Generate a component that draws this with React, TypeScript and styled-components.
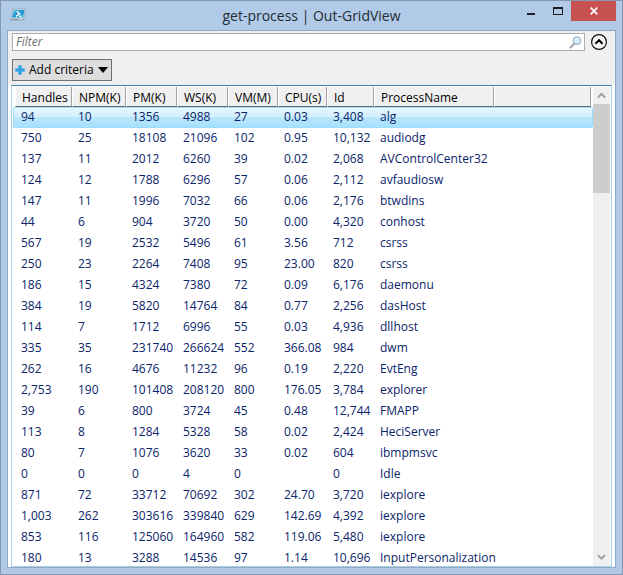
import React, { useState } from "react";
import styled, { createGlobalStyle, css } from "styled-components";

const GlobalStyle = createGlobalStyle`
  *, *::before, *::after { box-sizing: border-box; }
  html, body { margin: 0; padding: 0; }
  body { font: 12px/16px "Open Sans", "Noto Sans", sans-serif; color: #000; }
  button, input { font: inherit; color: inherit; margin: 0; }
`;

const Window = styled.main`
  display: flex;
  flex-direction: column;
  height: 100vh;
  padding: 0 6px 6px;
  background: #b0cae7;
  border: 1px solid #8497b3;
  overflow: hidden;
`;

const TitleBar = styled.header`
  display: grid;
  grid-template-columns: 131px 1fr 131px;
  flex: none;
  height: 29px;
`;

const AppIcon = styled.svg`
  display: block;
  width: 16px;
  height: 14px;
  margin: 7px 0 0 3px;
`;

const Title = styled.h1`
  margin: 0;
  font-size: 14px;
  font-weight: 400;
  line-height: 29px;
  text-align: center;
  white-space: nowrap;
  color: #222a33;
`;

const WindowButtons = styled.div`
  display: flex;
  justify-content: flex-end;
  align-items: flex-start;
`;

const WindowButton = styled.button<{ $close?: boolean }>`
  display: flex;
  align-items: center;
  justify-content: center;
  width: ${(p) => (p.$close ? 45 : 27)}px;
  height: 20px;
  padding: 0;
  border: 0;
  color: #1e1e1e;
  background: ${(p) => (p.$close ? "#c75050" : "transparent")};
`;

const Client = styled.div`
  display: flex;
  flex-direction: column;
  flex: 1;
  min-height: 0;
  border: 1px solid #8fa8c6;
  background: #fff;
`;

const Tools = styled.div`
  display: flex;
  flex-direction: column;
  align-items: flex-start;
  gap: 8px;
  flex: none;
  padding: 2px 7px 4px 4px;
  background: #f0f0f0;
`;

const FilterRow = styled.div`
  display: flex;
  align-items: center;
  gap: 5px;
  width: 100%;
`;

const SearchField = styled.div`
  display: flex;
  align-items: center;
  flex: 1;
  height: 18px;
  padding-right: 2px;
  border: 1px solid #abadb3;
  background: #fff;
`;

const FilterInput = styled.input`
  flex: 1;
  min-width: 0;
  height: 16px;
  padding: 0 3px;
  border: 0;
  outline: 0;
  background: transparent;
  &::placeholder { color: #6d6d6d; font-style: italic; opacity: 1; }
`;

const IconButton = styled.button`
  display: flex;
  flex: none;
  padding: 0;
  border: 0;
  background: transparent;
`;

const CriteriaButton = styled.button`
  display: flex;
  align-items: center;
  gap: 4px;
  height: 22px;
  padding: 0 3px 0 2px;
  border: 1px solid #707070;
  background: #ddd;
`;

const GridFrame = styled.section`
  display: flex;
  flex: 1;
  min-height: 0;
  margin: 0 3px;
  padding: 1px 1px 0;
  border: 1px solid #a9cfe2;
  border-top-color: #3c7fb1;
  background: #fff;
`;

const GridViewport = styled.div`
  flex: 1;
  min-width: 0;
  overflow: hidden;
`;

const Grid = styled.table`
  width: 100%;
  table-layout: fixed;
  border-collapse: separate;
  border-spacing: 0;
`;

const Column = styled.col<{ $width?: number }>`
  width: ${(p) => (p.$width ? `${p.$width}px` : "auto")};
`;

const HeaderCell = styled.th`
  height: 20px;
  padding: 0;
  font-weight: 400;
  text-align: left;
  white-space: nowrap;
  &:first-child { padding-left: 2px; }
  &:last-child { padding-right: 2px; }
`;

const HeaderLabel = styled.span`
  display: block;
  height: 20px;
  padding: 2px 0 0 6px;
  line-height: 18px;
  background: #f0f0f0;
  border-left: 1px solid #fff;
  border-right: 1px solid #a0a0a0;
  border-bottom: 1px solid #696969;
`;

const selectedCell = css`
  background: linear-gradient(#e6f6fe 0%, #d3effd 45%, #bae7fd 50%, #a5e0fb 100%);
  border-top: 1px solid #99defd;
  border-bottom: 1px solid #99defd;
  box-shadow: inset 0 1px #eefaff;
  line-height: 18px;
  &:first-child {
    border-left: 1px solid #99defd;
    border-radius: 2px 0 0 2px;
    padding-left: 7px;
  }
  &:last-child {
    border-right: 1px solid #99defd;
    border-radius: 0 2px 2px 0;
  }
`;

const Row = styled.tr<{ $selected: boolean }>`
  color: #0a246a;
  td {
    height: 21px;
    padding: 0 0 0 6px;
    line-height: 20px;
    white-space: nowrap;
    vertical-align: top;
  }
  td:first-child { padding-left: 8px; }
  ${(p) => p.$selected && css`&& td { ${selectedCell} }`}
`;

const ScrollBar = styled.div`
  display: flex;
  flex-direction: column;
  flex: none;
  width: 17px;
  background: #f0f0f0;
`;

const ScrollButton = styled.button`
  display: flex;
  align-items: center;
  justify-content: center;
  flex: none;
  height: 17px;
  padding: 0;
  border: 0;
  background: transparent;
`;

const ScrollTrack = styled.div`
  flex: 1;
`;

const ScrollThumb = styled.div`
  height: 20%;
  background: #cdcdcd;
`;

const columns: { name: string; width?: number }[] = [
  { name: "Handles", width: 59 },
  { name: "NPM(K)", width: 54 },
  { name: "PM(K)", width: 51 },
  { name: "WS(K)", width: 51 },
  { name: "VM(M)", width: 50 },
  { name: "CPU(s)", width: 49 },
  { name: "Id", width: 47 },
  { name: "ProcessName", width: 120 },
  { name: "" },
];

const processes: string[][] = [
  ["94", "10", "1356", "4988", "27", "0.03", "3,408", "alg"],
  ["750", "25", "18108", "21096", "102", "0.95", "10,132", "audiodg"],
  ["137", "11", "2012", "6260", "39", "0.02", "2,068", "AVControlCenter32"],
  ["124", "12", "1788", "6296", "57", "0.06", "2,112", "avfaudiosw"],
  ["147", "11", "1996", "7032", "66", "0.06", "2,176", "btwdins"],
  ["44", "6", "904", "3720", "50", "0.00", "4,320", "conhost"],
  ["567", "19", "2532", "5496", "61", "3.56", "712", "csrss"],
  ["250", "23", "2264", "7408", "95", "23.00", "820", "csrss"],
  ["186", "15", "4324", "7380", "72", "0.09", "6,176", "daemonu"],
  ["384", "19", "5820", "14764", "84", "0.77", "2,256", "dasHost"],
  ["114", "7", "1712", "6996", "55", "0.03", "4,936", "dllhost"],
  ["335", "35", "231740", "266624", "552", "366.08", "984", "dwm"],
  ["262", "16", "4676", "11232", "96", "0.19", "2,220", "EvtEng"],
  ["2,753", "190", "101408", "208120", "800", "176.05", "3,784", "explorer"],
  ["39", "6", "800", "3724", "45", "0.48", "12,744", "FMAPP"],
  ["113", "8", "1284", "5328", "58", "0.02", "2,424", "HeciServer"],
  ["80", "7", "1076", "3620", "33", "0.02", "604", "ibmpmsvc"],
  ["0", "0", "0", "4", "0", "", "0", "Idle"],
  ["871", "72", "33712", "70692", "302", "24.70", "3,720", "iexplore"],
  ["1,003", "262", "303616", "339840", "629", "142.69", "4,392", "iexplore"],
  ["853", "116", "125060", "164960", "582", "119.06", "5,480", "iexplore"],
  ["180", "13", "3288", "14536", "97", "1.14", "10,696", "InputPersonalization"],
];

function PowerShellIcon() {
  return (
    <AppIcon viewBox="0 0 16 14" aria-hidden="true">
      <defs>
        <linearGradient id="screen" x1="0" y1="0" x2="1" y2="1">
          <stop offset="0" stopColor="#58c4ec" />
          <stop offset="0.5" stopColor="#1b93cc" />
          <stop offset="1" stopColor="#35b5e4" />
        </linearGradient>
      </defs>
      <path d="M3 1h12.5l-2 11H0.5z" fill="#d9e6ee" stroke="#8ba0ae" strokeWidth="0.7" />
      <path d="M3.7 2h10.8l-1.4 7.5H2z" fill="url(#screen)" />
      <path d="M6.7 3.2l3 2.5-3.8 2.6M9.3 8.3h2.4" fill="none" stroke="#fff" strokeWidth="1.4" />
      <path d="M1.4 10.5h11.8l-0.3 1.7H0.6z" fill="#91a0a8" />
      <path d="M9.5 11.2h2.3" stroke="#e9f2f5" />
    </AppIcon>
  );
}

function Magnifier() {
  return (
    <svg width="13" height="13" viewBox="0 0 13 13" aria-hidden="true">
      <path d="M5.5 7.5L1.5 11.5" stroke="#a5a9b0" strokeWidth="2.4" strokeLinecap="round" />
      <circle cx="8" cy="4.6" r="3.7" fill="#d5ecfa" stroke="#a3b5cb" strokeWidth="1.3" />
      <path d="M6.2 4.2a2.2 2.2 0 0 1 2-1.7" fill="none" stroke="#fff" />
    </svg>
  );
}

function Chevron({ down }: { down?: boolean }) {
  return (
    <svg width="9" height="7" viewBox="0 0 9 7" aria-hidden="true">
      <path d={down ? "M1 1.2l3.5 3.6L8 1.2" : "M1 5.5l3.5-3.6L8 5.5"} fill="none" stroke="#9b9b9b" strokeWidth="1.8" />
    </svg>
  );
}

export default function App() {
  const [selected, setSelected] = useState(0);
  const [filter, setFilter] = useState("");
  const query = filter.toLowerCase();

  return (
    <>
      <GlobalStyle />
      <Window>
        <TitleBar>
          <PowerShellIcon />
          <Title>get-process | Out-GridView</Title>
          <WindowButtons>
            <WindowButton aria-label="Minimize">
              <svg width="8" height="12" viewBox="0 0 8 12"><path d="M0 8h8v2H0z" fill="currentColor" /></svg>
            </WindowButton>
            <WindowButton aria-label="Maximize">
              <svg width="10" height="8" viewBox="0 0 10 8"><path d="M0 0h10v8H0zM1 2v5h8V2z" fill="currentColor" fillRule="evenodd" /></svg>
            </WindowButton>
            <WindowButton $close aria-label="Close">
              <svg width="8" height="8" viewBox="0 0 8 8"><path d="M0.7 0.7l6.6 6.6M7.3 0.7L0.7 7.3" stroke="#fff" strokeWidth="1.7" /></svg>
            </WindowButton>
          </WindowButtons>
        </TitleBar>
        <Client>
          <Tools>
            <FilterRow>
              <SearchField>
                <FilterInput
                  aria-label="Filter"
                  placeholder="Filter"
                  value={filter}
                  onChange={(e) => setFilter(e.target.value)}
                />
                <IconButton aria-label="Search"><Magnifier /></IconButton>
              </SearchField>
              <IconButton aria-label="Collapse criteria">
                <svg width="18" height="18" viewBox="0 0 18 18">
                  <circle cx="9" cy="9" r="7.4" fill="#f8f8f8" stroke="#111" strokeWidth="1.2" />
                  <path d="M5.4 10.8L9 7.2l3.6 3.6" fill="none" stroke="#000" strokeWidth="2" />
                </svg>
              </IconButton>
            </FilterRow>
            <CriteriaButton>
              <svg width="10" height="10" viewBox="0 0 10 10" aria-hidden="true">
                <path d="M3.5 0.5h3v3h3v3h-3v3h-3v-3h-3v-3h3z" fill="#2f9fe0" stroke="#5fb4e6" strokeWidth="0.8" />
              </svg>
              Add criteria
              <svg width="10" height="6" viewBox="0 0 10 6" aria-hidden="true"><path d="M0 0h10L5 6z" /></svg>
            </CriteriaButton>
          </Tools>
          <GridFrame>
            <GridViewport>
              <Grid>
                <colgroup>
                  {columns.map((c) => <Column key={c.name} $width={c.width} />)}
                </colgroup>
                <thead>
                  <tr>
                    {columns.map((c) => (
                      <HeaderCell key={c.name} scope="col"><HeaderLabel>{c.name}</HeaderLabel></HeaderCell>
                    ))}
                  </tr>
                </thead>
                <tbody>
                  {processes.map((cells, i) =>
                    cells.some((c) => c.toLowerCase().includes(query)) ? (
                      <Row key={i} $selected={i === selected} onClick={() => setSelected(i)}>
                        {cells.map((c, j) => <td key={j}>{c}</td>)}
                        <td />
                      </Row>
                    ) : null
                  )}
                </tbody>
              </Grid>
            </GridViewport>
            <ScrollBar>
              <ScrollButton aria-label="Scroll up"><Chevron /></ScrollButton>
              <ScrollTrack><ScrollThumb /></ScrollTrack>
              <ScrollButton aria-label="Scroll down"><Chevron down /></ScrollButton>
            </ScrollBar>
          </GridFrame>
        </Client>
      </Window>
    </>
  );
}
